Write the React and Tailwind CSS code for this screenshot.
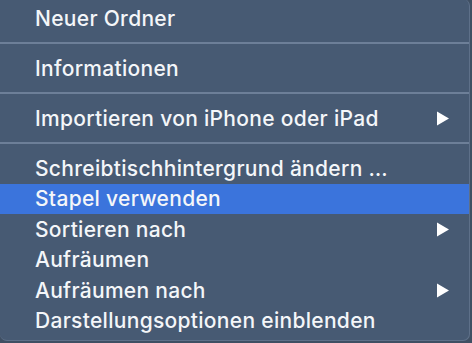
const items = [
  { label: "Neuer Ordner" },
  { sep: true },
  { label: "Informationen" },
  { sep: true },
  { label: "Importieren von iPhone oder iPad", sub: true },
  { sep: true },
  { label: "Schreibtischhintergrund ändern …" },
  { label: "Stapel verwenden", active: true },
  { label: "Sortieren nach", sub: true },
  { label: "Aufräumen" },
  { label: "Aufräumen nach", sub: true },
  { label: "Darstellungsoptionen einblenden" },
];

function Arrow() {
  return (
    <svg width="14" height="15" viewBox="0 0 14 15" className="shrink-0">
      <path d="M1 0.5 L13 7.5 L1 14.5 Z" fill="#ffffff" />
    </svg>
  );
}

export default function App() {
  return (
    <div className="w-[472px] h-[343px] bg-[#3f4f63] overflow-hidden">
      <div
        className="w-[470px] h-[342px] -mt-[1px] bg-[#475a73] rounded-b-[7px] rounded-tr-[7px] border-r border-b border-[#5e7089] pt-[4px] text-[#f4f6f9] text-[21px] font-medium tracking-[0.3px]"
        style={{ fontFamily: "Inter, 'Noto Sans', sans-serif" }}
      >
        {items.map((item, i) =>
          item.sep ? (
            <div key={i} className="h-[19.5px] flex items-center">
              <div className="h-[2px] w-full bg-[#6d7f98]" />
            </div>
          ) : (
            <div
              key={i}
              className={`h-[30.5px] flex items-center justify-between pl-[35px] pr-[19px] ${
                item.active ? "bg-[#3b74dc]" : ""
              }`}
            >
              <span className="leading-none">{item.label}</span>
              {item.sub && <Arrow />}
            </div>
          )
        )}
      </div>
    </div>
  );
}
